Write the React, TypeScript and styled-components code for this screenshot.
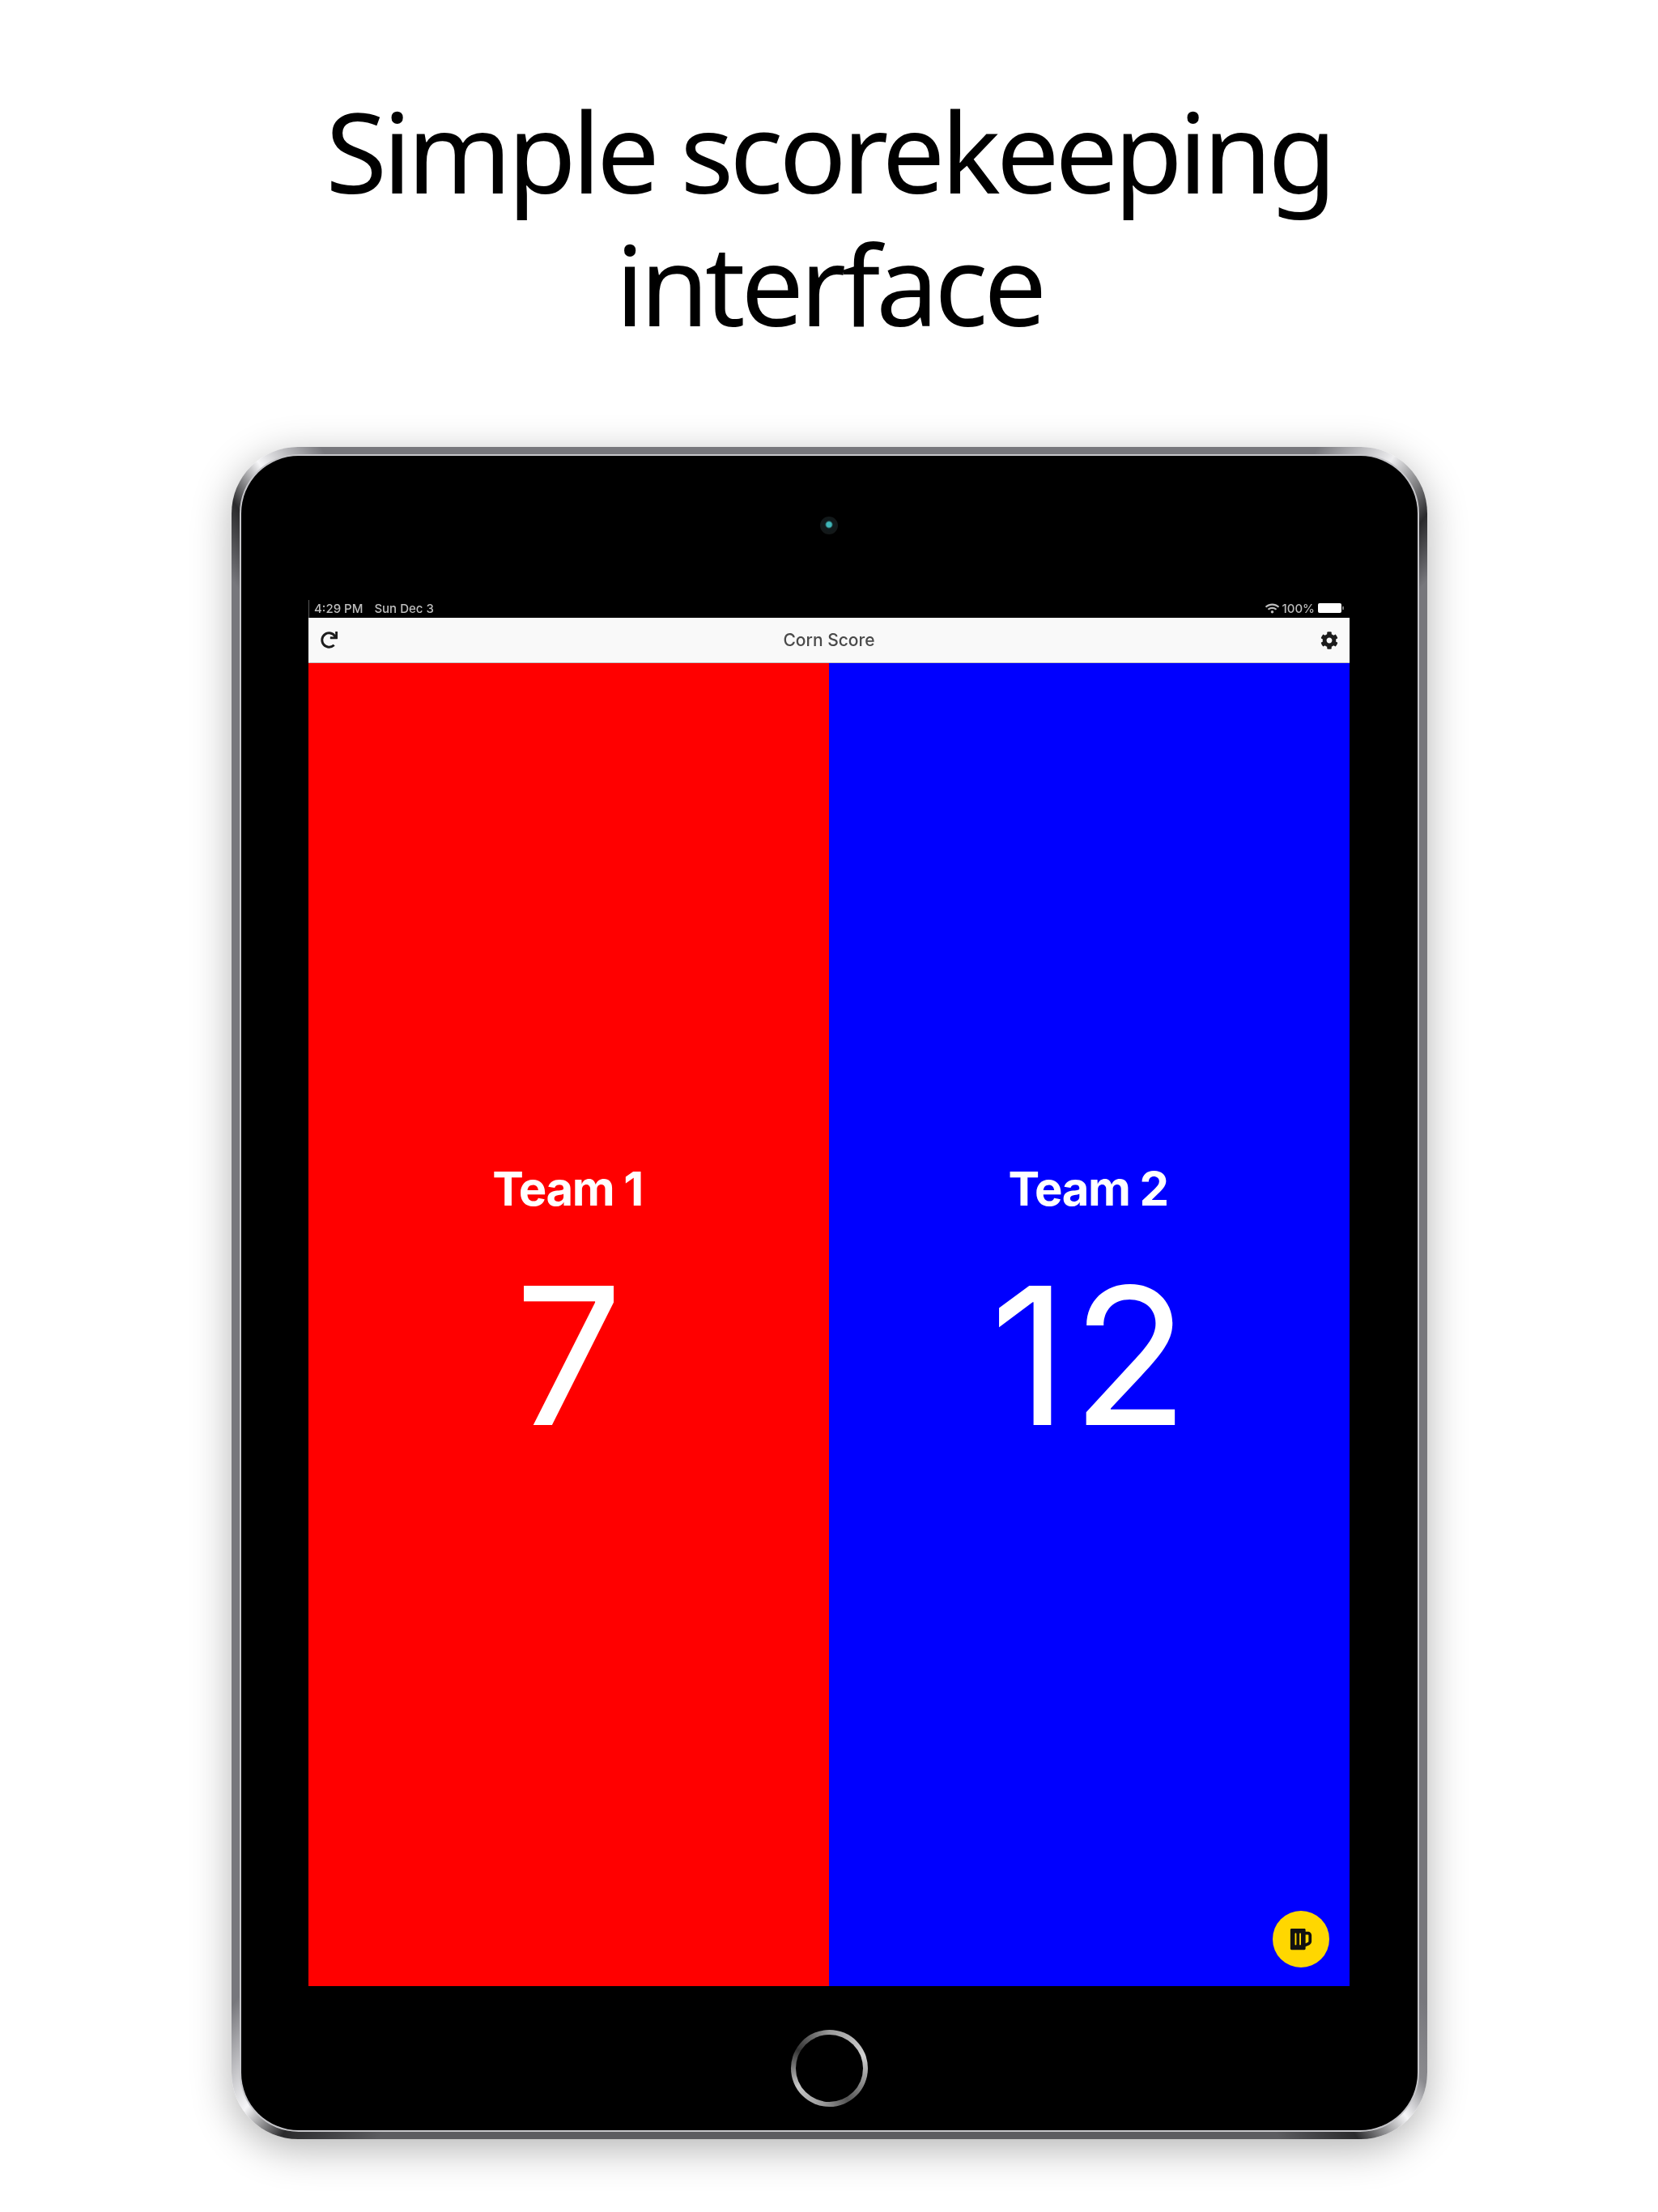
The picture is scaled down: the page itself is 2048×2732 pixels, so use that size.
import { createGlobalStyle } from "styled-components";
import styled from "styled-components";
import { FaRedo, FaCog, FaBeer, FaWifi } from "react-icons/fa";

const GlobalStyle = createGlobalStyle`
  body {
    margin: 0;
    background: #fff;
    font-family: "Inter", "Liberation Sans", sans-serif;
  }
`;

const Page = styled.div`
  width: 2048px;
  height: 2732px;
  overflow: hidden;
  display: flex;
  flex-direction: column;
  align-items: center;
`;

const Headline = styled.h1`
  margin: 0;
  flex: none;
  padding-top: 103px;
  height: 552px;
  box-sizing: border-box;
  font-family: "Noto Sans", sans-serif;
  font-weight: 400;
  font-size: 138px;
  line-height: 164px;
  letter-spacing: -5.2px;
  text-align: center;
  color: #000;
`;

const Bezel = styled.div`
  width: 1477px;
  height: 2090px;
  flex: none;
  box-sizing: border-box;
  padding: 11px 12px;
  border-radius: 82px;
  background: conic-gradient(
    from 0deg at 50% 50%,
    #77777c 0deg,
    #77777c 30deg,
    #eeeef0 34deg,
    #2a2a2c 37.5deg,
    #77777c 40deg,
    #77777c 140deg,
    #8a8a8e 143deg,
    #f6f6f8 145deg,
    #2a2a2c 148deg,
    #5c5c60 152deg,
    #5c5c60 208deg,
    #2a2a2c 213deg,
    #f6f6f8 215.6deg,
    #77777c 220deg,
    #77777c 320deg,
    #2a2a2c 323deg,
    #f6f6f8 325.5deg,
    #77777c 329deg,
    #77777c 360deg
  );
  box-shadow: 0 12px 50px rgba(0, 0, 0, 0.3);
`;

const Body = styled.div`
  height: 100%;
  box-sizing: border-box;
  border-radius: 71px;
  background: #000;
  box-shadow: 0 0 0 2px #c6c6ca;
  display: flex;
  flex-direction: column;
  align-items: center;
`;

const Camera = styled.div`
  flex: none;
  width: 22px;
  height: 22px;
  margin: 75px 0 81px;
  border-radius: 50%;
  background: radial-gradient(circle at 50% 45%, #3fb6b8 0 3px, #101a1c 5px, #161616 100%);
`;

const Screen = styled.div`
  width: 1286px;
  flex: none;
  display: flex;
  flex-direction: column;
  position: relative;
`;

const StatusBar = styled.div`
  height: 22px;
  box-sizing: border-box;
  padding: 0 7px 2px 6px;
  border-left: 1px solid #555;
  display: flex;
  align-items: center;
  justify-content: space-between;
  color: #bdbdbd;
  font-size: 15px;
  font-weight: 500;
  filter: blur(0.5px);
`;

const StatusGroup = styled.div<{ $gap: number }>`
  display: flex;
  align-items: center;
  gap: ${props => props.$gap}px;
`;

const Battery = styled.div`
  width: 29px;
  height: 12px;
  border-radius: 2px;
  background: #fff;
  margin-right: 3px;
  position: relative;

  &::after {
    content: "";
    position: absolute;
    left: 30px;
    top: 4px;
    width: 2px;
    height: 4px;
    background: #777;
  }
`;

const NavBar = styled.div`
  height: 56px;
  box-sizing: border-box;
  padding: 0 14px 0 15px;
  background: #f9f9f9;
  border-bottom: 1px solid #c4c4c4;
  display: flex;
  align-items: center;
  justify-content: space-between;
  color: #1c1c1c;
`;

const NavTitle = styled.div`
  font-size: 21px;
  font-weight: 500;
  color: #4a4a4a;
  filter: blur(0.4px);
`;

const Teams = styled.div`
  height: 1634px;
  display: flex;
`;

const TeamPanel = styled.div<{ $color: string }>`
  flex: 1;
  background: ${props => props.$color};
  color: #fff;
  display: flex;
  flex-direction: column;
  align-items: center;
  padding-top: 613px;
  box-sizing: border-box;
`;

const TeamName = styled.div`
  margin-right: 3px;
  font-size: 58px;
  line-height: 72px;
  font-weight: 700;
  letter-spacing: -1.5px;
`;

const TeamScore = styled.div`
  margin: 27px 0 0 5px;
  font-size: 236px;
  line-height: 286px;
  font-weight: 400;
  letter-spacing: 5px;
`;

const TipButton = styled.div`
  position: absolute;
  right: 25px;
  bottom: 23px;
  width: 70px;
  height: 70px;
  border-radius: 50%;
  background: #ffd700;
  display: flex;
  align-items: center;
  justify-content: center;
  color: #111;
`;

const BottomBezel = styled.div`
  flex: 1;
  padding-top: 24px;
  display: flex;
  align-items: center;
  justify-content: center;
`;

const HomeRing = styled.div`
  width: 95px;
  height: 95px;
  box-sizing: border-box;
  padding: 6px;
  border-radius: 50%;
  background: conic-gradient(#9a9a9a 0deg, #d0d0d0 70deg, #555 150deg, #999 190deg, #c8c8c8 240deg, #333 300deg, #9a9a9a 360deg);
`;

const HomeInner = styled.div`
  width: 100%;
  height: 100%;
  border-radius: 50%;
  background: #000;
`;

function App() {
  return (
    <Page>
      <GlobalStyle />
      <Headline>
        Simple scorekeeping
        <br />
        interface
      </Headline>
      <Bezel>
        <Body>
          <Camera />
          <Screen>
            <StatusBar>
              <StatusGroup $gap={14}>
                <span>4:29 PM</span>
                <span>Sun Dec 3</span>
              </StatusGroup>
              <StatusGroup $gap={4}>
                <FaWifi size={17} />
                <span>100%</span>
                <Battery />
              </StatusGroup>
            </StatusBar>
            <NavBar>
              <FaRedo size={21} />
              <NavTitle>Corn Score</NavTitle>
              <FaCog size={22} />
            </NavBar>
            <Teams>
              <TeamPanel $color="#ff0000">
                <TeamName>Team 1</TeamName>
                <TeamScore>7</TeamScore>
              </TeamPanel>
              <TeamPanel $color="#0000ff">
                <TeamName>Team 2</TeamName>
                <TeamScore>12</TeamScore>
              </TeamPanel>
            </Teams>
            <TipButton>
              <FaBeer size={30} />
            </TipButton>
          </Screen>
          <BottomBezel>
            <HomeRing>
              <HomeInner />
            </HomeRing>
          </BottomBezel>
        </Body>
      </Bezel>
    </Page>
  );
}

export default App;
